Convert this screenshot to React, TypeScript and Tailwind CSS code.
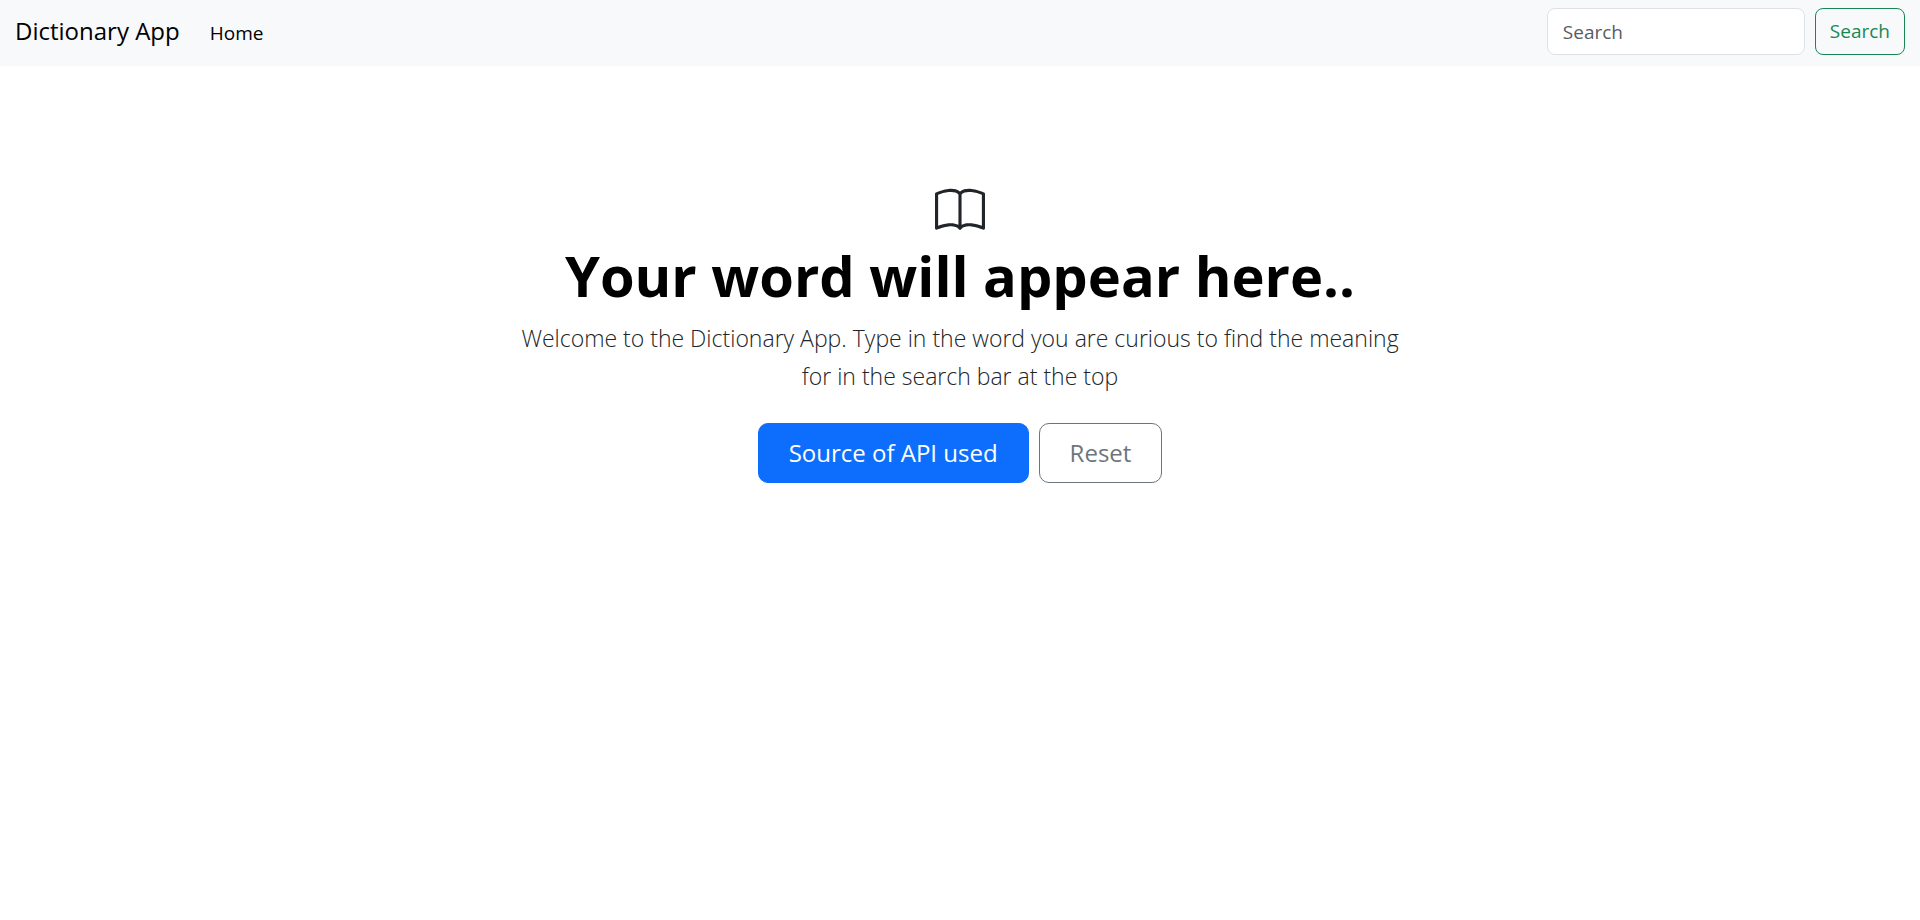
export default function App() {
  return (
    <div className="min-h-screen bg-white font-['Open_Sans','Noto_Sans',sans-serif] text-[#212529]">
      <nav className="flex items-center justify-between bg-[#f8f9fa] px-[15px] pt-2 pb-[11px]">
        <div className="flex items-baseline gap-[30px]">
          <a href="#" className="text-2xl text-black">Dictionary App</a>
          <a href="#" className="text-[19px] text-black">Home</a>
        </div>
        <form className="flex gap-[10px]" role="search">
          <input
            type="search"
            placeholder="Search"
            aria-label="Search"
            className="h-[47px] w-[258px] rounded-lg border border-[#dee2e6] bg-white px-[15px] text-[19px] outline-none placeholder:text-[#595c5f]"
          />
          <button
            type="button"
            className="h-[47px] rounded-lg border border-[#198754] px-[14px] text-[19px] text-[#198754]"
          >
            Search
          </button>
        </form>
      </nav>
      <main className="flex flex-col items-center px-4 pt-[120px] text-center">
        <svg width="50" height="50" viewBox="0 0 16 16" fill="currentColor" aria-hidden="true">
          <path d="M1 2.828c.885-.37 2.154-.769 3.388-.893 1.33-.134 2.458.063 3.112.752v9.746c-.935-.53-2.12-.603-3.213-.493-1.18.12-2.37.461-3.287.811V2.828zm7.5-.141c.654-.689 1.782-.886 3.112-.752 1.234.124 2.503.523 3.388.893v9.923c-.918-.35-2.107-.692-3.287-.81-1.094-.111-2.278-.039-3.213.492V2.687zM8 1.783C7.015.936 5.587.81 4.287.94c-1.514.153-3.042.672-3.994 1.105A.5.5 0 0 0 0 2.5v11a.5.5 0 0 0 .707.455c.882-.4 2.303-.881 3.68-1.02 1.409-.142 2.59.087 3.223.877a.5.5 0 0 0 .78 0c.633-.79 1.814-1.019 3.222-.877 1.378.139 2.8.62 3.681 1.02A.5.5 0 0 0 16 13.5v-11a.5.5 0 0 0-.293-.455c-.952-.433-2.48-.952-3.994-1.105C10.413.809 8.985.936 8 1.783z" />
        </svg>
        <h1 className="mt-[3px] text-[56px] leading-[72px] font-bold text-black">Your word will appear here..</h1>
        <p className="mt-2 max-w-[900px] text-[23px] leading-[38px] font-light">
          Welcome to the Dictionary App. Type in the word you are curious to find the meaning for in the search bar at the top
        </p>
        <div className="mt-7 flex gap-[10px]">
          <button type="button" className="h-[60px] rounded-[10px] border border-[#0d6efd] bg-[#0d6efd] px-[30px] text-2xl text-white">
            Source of API used
          </button>
          <button type="button" className="h-[60px] rounded-[10px] border border-[#6c757d] px-[30px] text-2xl text-[#6c757d]">
            Reset
          </button>
        </div>
      </main>
    </div>
  );
}
